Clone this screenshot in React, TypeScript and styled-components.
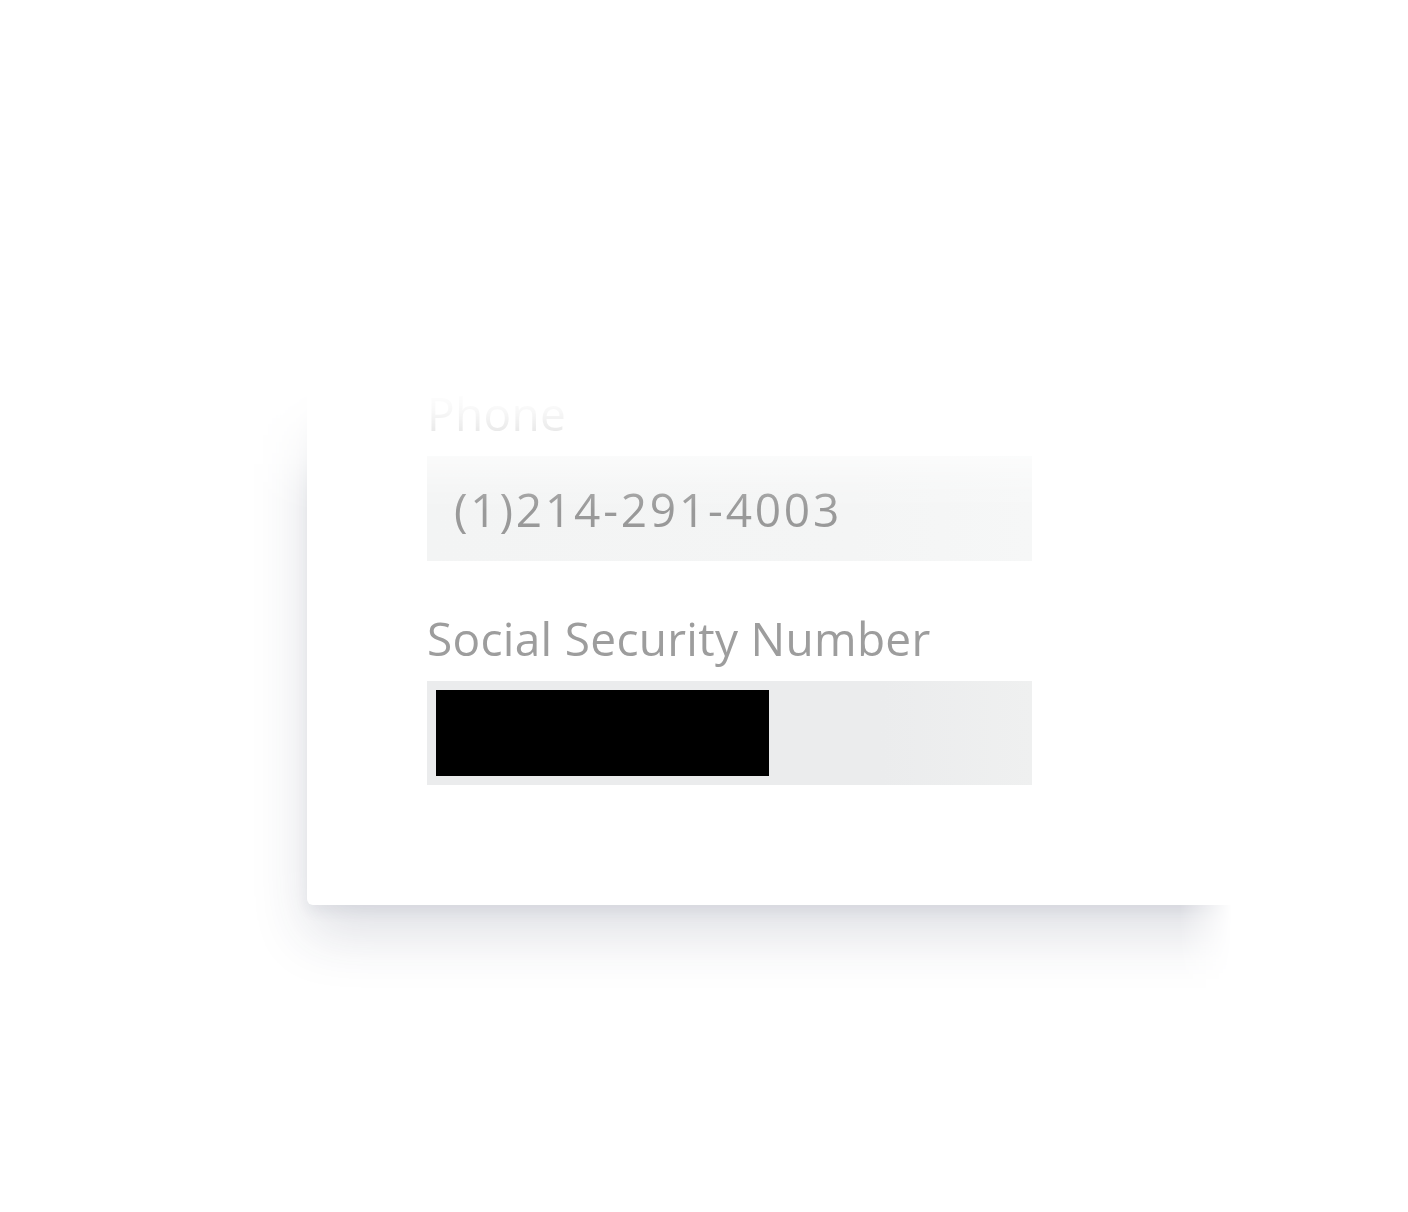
import React from "react";
import styled, { createGlobalStyle } from "styled-components";

const GlobalStyle = createGlobalStyle`
  html, body {
    margin: 0;
    padding: 0;
    background: #ffffff;
  }
  body {
    font-family: "Open Sans", "Noto Sans", sans-serif;
  }
`;

const fadeY = `linear-gradient(
      to bottom,
      transparent 390px,
      rgba(0, 0, 0, 0.08) 412px,
      rgba(0, 0, 0, 0.4) 456px,
      rgba(0, 0, 0, 0.85) 490px,
      #000 510px
    )`;
const fadeX = `linear-gradient(to right, #000 1180px, transparent 1232px)`;

const Stage = styled.div`
  width: 1408px;
  height: 1212px;
  box-sizing: border-box;
  padding: 330px 0 0 307px;
  overflow: hidden;
  background: #ffffff;
  -webkit-mask-image: ${fadeY}, ${fadeX};
  -webkit-mask-composite: source-in;
  mask-image: ${fadeY}, ${fadeX};
  mask-composite: intersect;
`;

const Card = styled.section`
  width: 960px;
  box-sizing: border-box;
  padding: 60px 0 120px 120px;
  background: #ffffff;
  border-radius: 6px;
  box-shadow: 0 30px 56px rgba(40, 50, 80, 0.15), 0 6px 14px rgba(40, 50, 80, 0.07);
  display: flex;
  flex-direction: column;
  gap: 54px;
`;

const Field = styled.div`
  display: flex;
  flex-direction: column;
  width: 605px;
`;

const Label = styled.label`
  display: block;
  font-size: 46px;
  line-height: 46px;
  letter-spacing: 0.3px;
  color: #9d9d9d;
  margin-bottom: 20px;
  white-space: nowrap;
`;

const InputBox = styled.div<{ $tone: "light" | "mid" }>`
  height: ${(p) => (p.$tone === "light" ? 105 : 104)}px;
  box-sizing: border-box;
  display: flex;
  align-items: center;
  padding: 0 ${(p) => (p.$tone === "light" ? "27px" : "9px")};
  background: ${(p) =>
    p.$tone === "light"
      ? "linear-gradient(to right, #f3f4f4 0%, #f4f5f5 70%, #f6f7f7 100%)"
      : "linear-gradient(to right, #ebeced 0%, #ebeced 75%, #eff0f0 100%)"};
`;

const Value = styled.span`
  font-size: 46px;
  letter-spacing: 2.8px;
  color: #999999;
  white-space: nowrap;
`;

const Redaction = styled.span`
  display: block;
  width: 333px;
  height: 86px;
  background: #000000;
`;

export default function App() {
  return (
    <>
      <GlobalStyle />
      <Stage>
        <Card>
          <Field>
            <Label>Phone</Label>
            <InputBox $tone="light">
              <Value>(1)214-291-4003</Value>
            </InputBox>
          </Field>
          <Field>
            <Label>Social Security Number</Label>
            <InputBox $tone="mid">
              <Redaction />
            </InputBox>
          </Field>
        </Card>
      </Stage>
    </>
  );
}
